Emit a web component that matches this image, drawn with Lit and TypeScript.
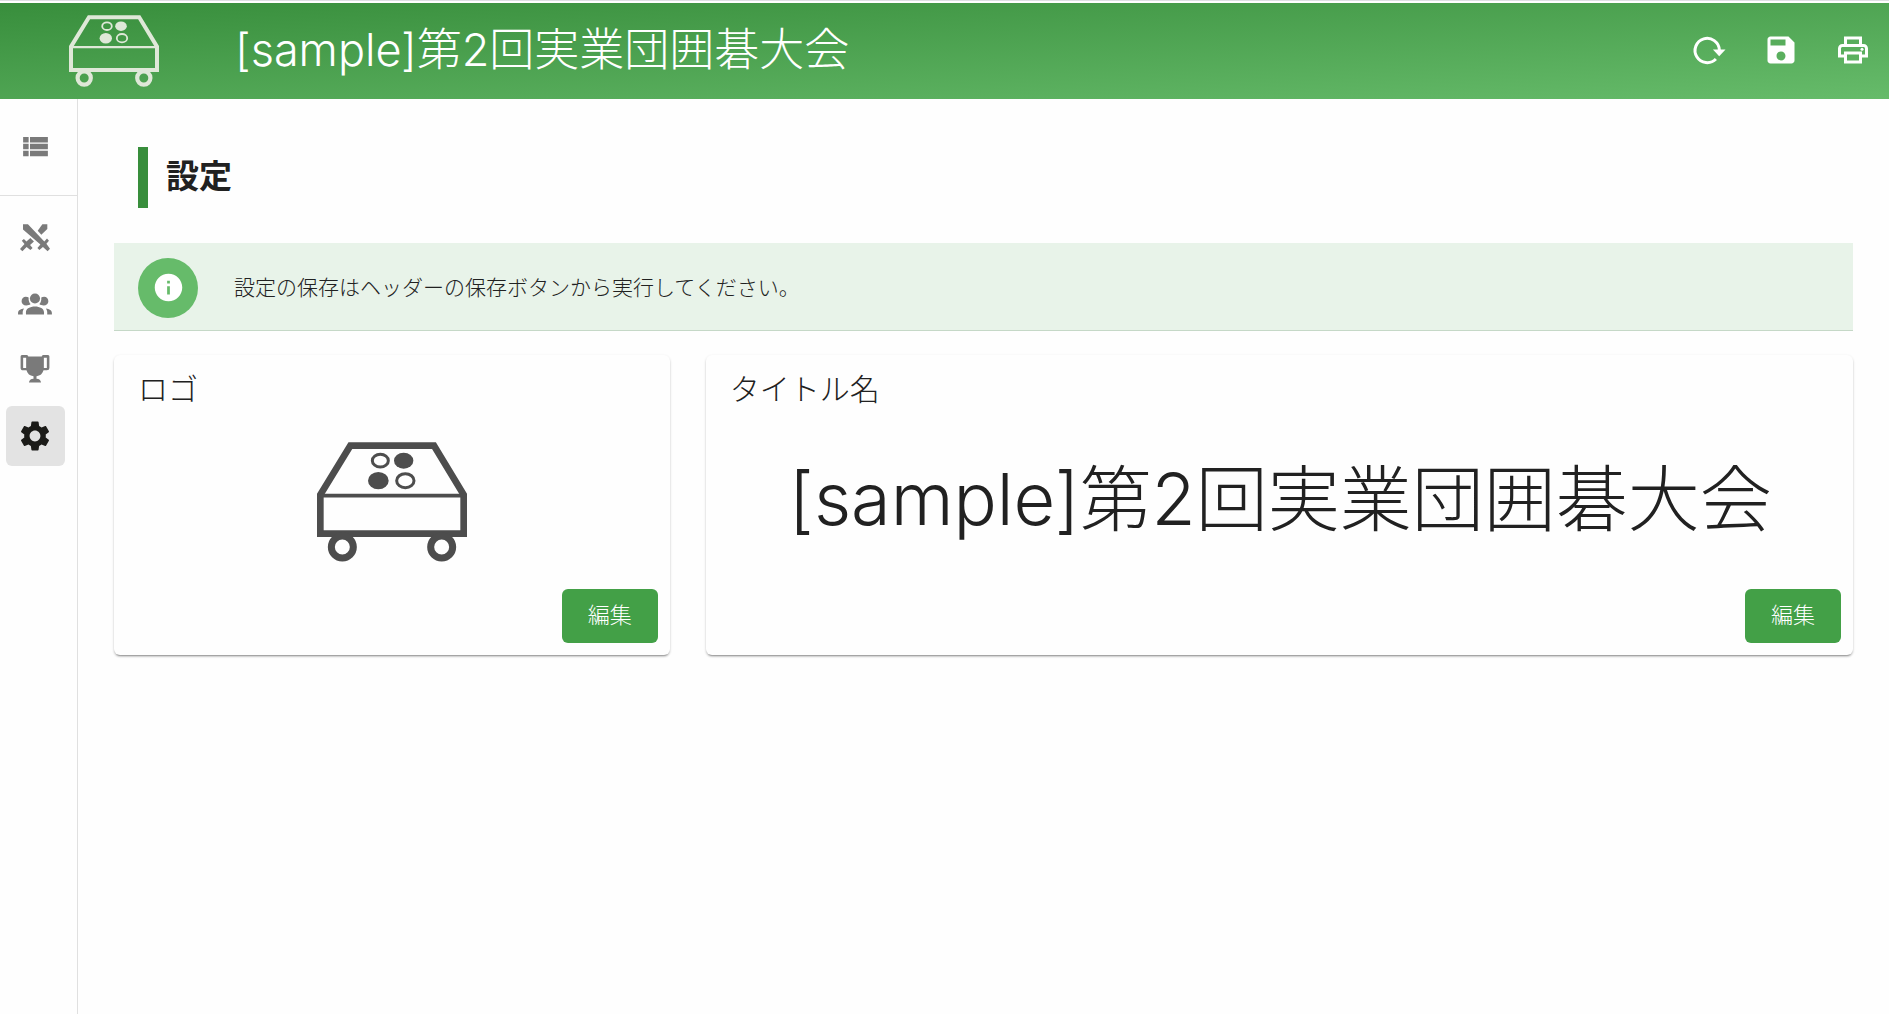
import { LitElement, html, css, svg } from "lit";
import { customElement, property } from "lit/decorators.js";
import { classMap } from "lit/directives/class-map.js";

const icons = {
  list: svg`<path d="M3 14h4v-4H3v4zm0 5h4v-4H3v4zM3 9h4V5H3v4zm5 5h13v-4H8v4zm0 5h13v-4H8v4zM8 5v4h13V5H8z"/>`,
  matches: svg`<path d="M4 2.900h3.300L18.200 14.400l1.800-2 1.300 1.400-1.700 2 2.400 3.300-1.600 1.800-3.100-2.900-2.400 2-1.300-1.300 2-2.300L4 6.400z"/><path d="M16.900 2.900h3.300V6l-4 3.800-2.400-2.700z"/><path d="M8.900 12l2.400 2.400-2.600 2.300 1.700 2L8.900 20l-2.500-2-2.800 2.900L2 19.300 5 16l-1.800-2.200 1.400-1.200 1.700 1.800z"/>`,
  groups: svg`<g transform="translate(.7 2.9) scale(.94)"><circle cx="12" cy="5.800" r="3.600"/><path d="M5.500 4.500c.9 0 1.500.2 2 .5-.2 2 .4 3.700 1.400 4.700-.7.700-1.800 1-3.100 1-1.900 0-3.300-1.300-3.300-3s1.300-3.200 3-3.200zM18.500 4.500c-.9 0-1.500.2-2 .5.200 2-.4 3.700-1.400 4.700.700.700 1.800 1 3.100 1 1.900 0 3.300-1.300 3.300-3s-1.300-3.200-3-3.200z"/><path d="M5.600 17.200v-1.700c0-2.400 2.900-4 6.400-4s6.400 1.600 6.400 4v1.700zM0 17.200v-1.100c0-1.900 1.700-3.100 4.300-3.300-.7.900-1 1.800-1 2.900v1.500zM24 17.200v-1.100c0-1.900-1.700-3.100-4.300-3.300.7.900 1 1.800 1 2.900v1.500z"/></g>`,
  trophy: svg`<path fill-rule="evenodd" d="M3.300 2h3.200q1 0 1 1h9q0-1 1-1h3.200q.9 0 .9 1v7.600q0 1.600-1.700 1.600h-2.200c-.7 2.300-2.200 3.700-4.700 4v1.700c1.800.1 2.900.9 3 2.500H8c.1-1.600 1.200-2.400 3-2.500v-1.700c-2.500-.3-4-1.700-4.700-4H4.100q-1.700 0-1.700-1.600V3q0-1 .9-1zm.8 1.900v6.700h2V3.900zm13.800 0v6.700h2V3.900z"/>`,
  settings: svg`<path d="M19.140 12.940c.04-.3.060-.61.060-.94 0-.32-.02-.64-.07-.94l2.030-1.580c.18-.14.230-.41.120-.61l-1.920-3.320c-.12-.22-.37-.29-.59-.22l-2.390.96c-.5-.38-1.030-.7-1.620-.94l-.36-2.540c-.04-.24-.24-.41-.48-.41h-3.840c-.24 0-.43.170-.47.410l-.36 2.540c-.59.240-1.130.570-1.620.940l-2.390-.96c-.22-.08-.47 0-.59.220L2.740 8.870c-.12.210-.08.470.120.610l2.030 1.580c-.05.300-.09.630-.09.940s.02.640.07.940l-2.030 1.580c-.18.140-.23.410-.12.610l1.920 3.320c.12.220.37.290.59.220l2.390-.96c.5.380 1.030.700 1.620.940l.36 2.540c.05.240.240.410.480.410h3.840c.24 0 .44-.17.470-.41l.36-2.540c.59-.24 1.130-.56 1.620-.94l2.390.960c.22.080.470 0 .590-.22l1.920-3.320c.12-.22.070-.47-.12-.61l-2.010-1.580zM12 15.600c-1.980 0-3.600-1.620-3.600-3.600s1.620-3.600 3.600-3.600 3.600 1.620 3.600 3.600-1.620 3.600-3.600 3.600z"/>`,
  reload: svg`<path d="M16.600 18A8.100 8.100 0 1 1 18.900 12" fill="none" stroke="currentColor" stroke-width="2"/><path d="M14.600 11.600H23l-4.200 4.600z"/>`,
  save: svg`<path d="M17 3H5c-1.110 0-2 .9-2 2v14c0 1.100.890 2 2 2h14c1.100 0 2-.9 2-2V7l-4-4zm-5 16c-1.660 0-3-1.340-3-3s1.340-3 3-3 3 1.340 3 3-1.340 3-3 3zm3-10H5V5h10v4z"/>`,
  print: svg`<path d="M19 8h-1V3H6v5H5c-1.660 0-3 1.340-3 3v6h4v4h12v-4h4v-6c0-1.660-1.340-3-3-3zM8 5h8v3H8V5zm8 12v2H8v-4h8v2zm2-2v-2H6v2H4v-4c0-.55.450-1 1-1h14c.55 0 1 .450 1 1v4h-2z"/><circle cx="18" cy="11.500" r="1"/>`,
  info: svg`<path d="M12 2C6.480 2 2 6.480 2 12s4.480 10 10 10 10-4.480 10-10S17.520 2 12 2zm1 15h-2v-6h2v6zm0-8h-2V7h2v2z"/>`,
};

type IconName = keyof typeof icons;

@customElement("ui-icon")
export class UiIcon extends LitElement {
  @property() name: IconName = "list";

  static styles = css`
    :host { display: block; width: 36px; height: 36px; }
    .glyph { display: block; width: 100%; height: 100%; fill: currentColor; }
  `;

  render() {
    return html`<svg class="glyph" viewBox="0 0 24 24" aria-hidden="true">${icons[this.name]}</svg>`;
  }
}

@customElement("goban-logo")
export class GobanLogo extends LitElement {
  static styles = css`
    :host { display: block; }
    .art { display: block; width: 100%; height: auto; }
    .line { fill: none; stroke: currentColor; }
    .dot { fill: currentColor; }
  `;

  render() {
    return html`
      <svg class="art" viewBox="81 66 450 360" aria-hidden="true">
        <path class="line" stroke-width="20" stroke-linejoin="miter" d="M91 341V224L181 77H432L521 224V341z" />
        <path class="line" stroke-width="11" d="M91 227H521" />
        <ellipse class="line" stroke-width="9" cx="271" cy="122" rx="24" ry="19" />
        <ellipse class="dot" cx="341" cy="122" rx="29" ry="24" />
        <ellipse class="dot" cx="265" cy="182" rx="31" ry="26" />
        <ellipse class="line" stroke-width="9" cx="346" cy="182" rx="26" ry="21" />
        <circle class="line" stroke-width="21" cx="157" cy="381" r="33" />
        <circle class="line" stroke-width="21" cx="455" cy="381" r="33" />
      </svg>
    `;
  }
}

@customElement("app-root")
export class AppRoot extends LitElement {
  private readonly eventTitle = "[sample]第2回実業団囲碁大会";

  private readonly actions: { icon: IconName; label: string }[] = [
    { icon: "reload", label: "再読み込み" },
    { icon: "save", label: "保存" },
    { icon: "print", label: "印刷" },
  ];

  private readonly sections: { icon: IconName; label: string; active?: boolean }[] = [
    { icon: "matches", label: "対局" },
    { icon: "groups", label: "チーム" },
    { icon: "trophy", label: "成績" },
    { icon: "settings", label: "設定", active: true },
  ];

  static styles = css`
    :host {
      display: flex;
      flex-direction: column;
      min-height: 100vh;
      box-sizing: border-box;
      border-top: 1px solid #dedfe3;
      background: #fefefe;
      color: #212121;
      font-family: "Noto Sans CJK JP", "Noto Sans", sans-serif;
      font-weight: 300;
    }
    * { box-sizing: border-box; }
    h1, h2, h3, p { margin: 0; font-weight: 300; }
    button { border: 0; font: inherit; color: inherit; cursor: pointer; }

    .header {
      display: flex;
      align-items: center;
      height: 96px;
      margin-top: 2px;
      padding-left: 69px;
      background: linear-gradient(to bottom right, #388e3c, #66bb6a);
      color: #fff;
    }
    .header-logo { width: 90px; color: #dfe8d8; }
    .header-title, .preview-title { font-family: Inter, "Noto Sans CJK JP", sans-serif; white-space: nowrap; }
    .header-title { flex: 1; margin-left: 76px; padding-bottom: 2px; font-size: 45px; line-height: 60px; }
    .header-actions { display: flex; padding-bottom: 2px; }
    .action { display: grid; place-items: center; width: 72px; height: 72px; padding: 0; background: none; }

    .body { display: flex; flex: 1; }
    .sidebar { width: 78px; border-right: 1px solid #e0e0e0; }
    .menu { display: flex; align-items: center; height: 97px; padding: 0 6px 2px 7px; border-bottom: 1px solid #e0e0e0; }
    .menu-icon { width: 33px; height: 33px; }
    .nav { display: flex; flex-direction: column; gap: 6px; padding: 12px 6px; }
    .nav-item {
      display: grid;
      place-items: center;
      width: 59px;
      height: 60px;
      padding: 0 2px 0 0;
      border-radius: 6px;
      background: none;
      color: #7a7a7a;
    }
    .nav-item.active { background: #e3e3e3; color: #1b1b18; }

    .content { flex: 1; min-width: 0; padding: 48px 36px; }
    .heading { display: flex; align-items: center; margin-left: 24px; padding: 0 0 8px 18px; height: 61px; border-left: 10px solid #388e3c; font-size: 33px; font-weight: 700; line-height: 48px; }
    .notice {
      display: flex;
      align-items: center;
      gap: 36px;
      height: 88px;
      margin: 35px 0 24px;
      padding: 2px 24px 0;
      background: #e8f3e9;
      border-bottom: 1px solid #c5d8c7;
      font-size: 21px;
    }
    .notice-text { padding-bottom: 4px; }
    .badge { display: grid; place-items: center; width: 60px; height: 60px; border-radius: 50%; background: #66bb6a; color: #fff; }
    .badge-icon { width: 33px; height: 33px; }

    .cards { display: grid; grid-template-columns: repeat(12, minmax(0, 1fr)); gap: 36px; }
    .card {
      display: flex;
      flex-direction: column;
      height: 300px;
      padding: 12px;
      border-radius: 6px;
      background: #fefefe;
      box-shadow: 0 3px 1px -2px rgba(0, 0, 0, 0.2), 0 2px 2px rgba(0, 0, 0, 0.14), 0 1px 3px rgba(0, 0, 0, 0.12);
    }
    .narrow { grid-column: span 4; }
    .wide { grid-column: span 8; }
    .card-title { padding: 0 12px; font-size: 30px; line-height: 40px; }
    .preview { flex: 1; display: grid; place-items: center; }
    .preview-logo { width: 150px; margin-top: 8px; color: #4d4d4d; }
    .preview-title { padding: 2px 0 0 2px; font-size: 72px; line-height: 96px; }
    .edit { align-self: flex-end; width: 96px; height: 54px; padding: 0 0 6px; border-radius: 6px; background: #43a047; color: #fff; font-size: 22px; line-height: 32px; }
  `;

  render() {
    return html`
      <header class="header">
        <goban-logo class="header-logo"></goban-logo>
        <h1 class="header-title">${this.eventTitle}</h1>
        <div class="header-actions">
          ${this.actions.map(
            (a) => html`<button class="action" aria-label=${a.label}><ui-icon name=${a.icon}></ui-icon></button>`
          )}
        </div>
      </header>
      <div class="body">
        <aside class="sidebar">
          <div class="menu">
            <button class="nav-item" aria-label="メニュー"><ui-icon class="menu-icon" name="list"></ui-icon></button>
          </div>
          <nav class="nav">
            ${this.sections.map(
              (s) => html`<button class=${classMap({ "nav-item": true, active: !!s.active })} aria-label=${s.label}>
                <ui-icon name=${s.icon}></ui-icon>
              </button>`
            )}
          </nav>
        </aside>
        <main class="content">
          <h2 class="heading">設定</h2>
          <div class="notice">
            <span class="badge"><ui-icon class="badge-icon" name="info"></ui-icon></span>
            <p class="notice-text">設定の保存はヘッダーの保存ボタンから実行してください。</p>
          </div>
          <div class="cards">
            <section class="card narrow">
              <h3 class="card-title">ロゴ</h3>
              <div class="preview"><goban-logo class="preview-logo"></goban-logo></div>
              <button class="edit" aria-label="ロゴを編集">編集</button>
            </section>
            <section class="card wide">
              <h3 class="card-title">タイトル名</h3>
              <div class="preview"><div class="preview-title">${this.eventTitle}</div></div>
              <button class="edit" aria-label="タイトル名を編集">編集</button>
            </section>
          </div>
        </main>
      </div>
    `;
  }
}
